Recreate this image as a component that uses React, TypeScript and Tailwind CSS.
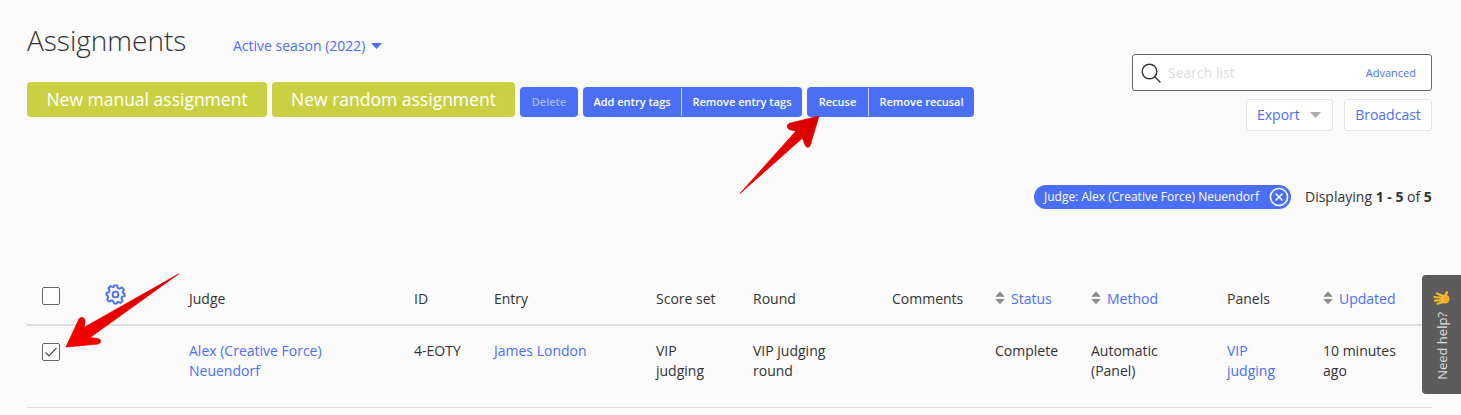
import React from "react";

const columns = "grid grid-cols-[77px_85px_225px_80px_162px_97px_139px_103px_96px_136px_96px_109px]";

const SortIcon = () => (
  <svg width="10" height="14" viewBox="0 0 10 14" className="mb-[3px] mr-[6px] shrink-0">
    <path d="M5 0.5 L9.8 5.8 L0.2 5.8 Z M0.2 8 L9.8 8 L5 13.3 Z" fill="#8a8a8a" />
  </svg>
);

const Caret = ({ color }: { color: string }) => (
  <svg width="11" height="6" viewBox="0 0 11 6">
    <path d="M0 0 L11 0 L5.5 6 Z" fill={color} />
  </svg>
);

const Checkbox = ({ checked }: { checked?: boolean }) => (
  <span className="flex h-[18px] w-[18px] items-center justify-center rounded-[2px] border border-[#666] bg-white">
    {checked && (
      <svg width="14" height="12" viewBox="0 0 14 12">
        <path d="M1.5 6.5 L5 10 L12.5 2" fill="none" stroke="#444" strokeWidth="1.1" />
      </svg>
    )}
  </span>
);

const GearIcon = () => (
  <svg width="21" height="21" viewBox="0 0 21 21" fill="none" stroke="#4a6ff5" strokeWidth="1.9" strokeLinejoin="round">
    <circle cx="10.5" cy="10.5" r="2.9" />
    <path d="M8.9 1.4 H12.1 L12.7 3.9 L14.6 4.7 L16.8 3.4 L19 5.6 L17.8 7.8 L18.5 9.6 L19.6 9.9 V12.1 L17.1 12.7 L16.3 14.6 L17.6 16.8 L15.4 19 L13.2 17.8 L12.1 18.3 L11.9 19.6 H9.1 L8.3 17.2 L6.4 16.4 L4.2 17.6 L2 15.4 L3.2 13.2 L2.5 11.4 L1.4 11.1 V8.9 L3.9 8.3 L4.7 6.4 L3.4 4.2 L5.6 2 L7.8 3.2 L8.5 2.9 Z" />
  </svg>
);

const SearchIcon = () => (
  <svg width="20" height="20" viewBox="0 0 20 20" fill="none" stroke="#333" strokeWidth="1.4" strokeLinecap="round">
    <circle cx="8.5" cy="8.5" r="7.3" />
    <path d="M13.8 13.8 L19 19" />
  </svg>
);

const HandIcon = () => (
  <svg width="17" height="14" viewBox="0 0 17 14" fill="none" stroke="#f6bb2e" strokeWidth="2.2" strokeLinecap="round">
    <circle cx="12" cy="8" r="4.6" fill="#f0a92a" stroke="none" />
    <path d="M10 5 L4 2.5 M10 7 L1.5 6 M10 9 L2 9.7 M10 11 L4.5 12.7 M12.5 4.5 L14 1.2" />
  </svg>
);

const SortHeader = ({ label }: { label: string }) => (
  <div className="flex items-center text-[#4a6ff5]">
    <SortIcon />
    {label}
  </div>
);

// The two red annotation arrows drawn on top of the screenshot
const Arrows = () => (
  <svg className="pointer-events-none absolute left-0 top-0" width="1461" height="415" viewBox="0 0 1461 415">
    <defs>
      <linearGradient id="arrowRed" x1="0" y1="1" x2="1" y2="0">
        <stop offset="0" stopColor="#f40000" />
        <stop offset="1" stopColor="#d80000" />
      </linearGradient>
    </defs>
    <path
      d="M740 193.5 L796 131 L789 129.5 Q785.5 126 789 123.5 L819 116 L810 146 Q807 149 805 145 L802.5 138 Z"
      fill="url(#arrowRed)"
      stroke="url(#arrowRed)"
      strokeWidth="0.8"
      strokeLinejoin="round"
    />
    <path
      d="M178.5 274 L84 327.5 L85 321.5 Q85 317 81 317.5 Q79.5 317.5 79 319 L66 347 L98 344 Q101 343 100.5 340.5 Q100 338.5 97 338.5 L90 337.5 Z"
      fill="url(#arrowRed)"
      stroke="url(#arrowRed)"
      strokeWidth="0.8"
      strokeLinejoin="round"
    />
  </svg>
);

export default function App() {
  return (
    <div className="relative h-[415px] w-[1461px] overflow-hidden bg-[#fafafa] pl-[27px] pr-[29px] font-['Open_Sans',sans-serif] text-[14px] leading-[20px] text-[#333]">
      <div className="flex items-start justify-between pt-[20px]">
        <div>
          <div className="flex h-[40px] items-center">
            <h1 className="w-[206px] text-[28px] font-light leading-[38px]">Assignments</h1>
            <div className="mt-[12px] flex items-center gap-[6px] text-[#4a6ff5]">
              Active season (2022)
              <Caret color="#4a6ff5" />
            </div>
          </div>
          <div className="mt-[22px] flex items-end gap-[5px] text-white">
            <button className="h-[35px] w-[240px] rounded-[4px] bg-[#c9d142] pb-[2px] text-[17.5px]">New manual assignment</button>
            <button className="h-[35px] w-[243px] rounded-[4px] bg-[#c9d142] pb-[2px] text-[17.5px]">New random assignment</button>
            <button className="h-[30px] w-[58px] rounded-[4px] bg-[#4a6ff5] text-[11px] font-[550] text-[#a9b9f3]">Delete</button>
            <div className="flex h-[30px] w-[219px] items-center rounded-[4px] bg-[#4a6ff5] text-[11px] font-[550]">
              <span className="w-[98px] text-center leading-[28px]">Add entry tags</span>
              <span className="flex-1 border-l border-[#c8d3fb] text-center leading-[28px]">Remove entry tags</span>
            </div>
            <div className="flex h-[30px] w-[167px] items-center rounded-[4px] bg-[#4a6ff5] text-[11px] font-[550]">
              <span className="w-[61px] text-center leading-[28px]">Recuse</span>
              <span className="flex-1 border-l border-[#c8d3fb] text-center leading-[28px]">Remove recusal</span>
            </div>
          </div>
        </div>
        <div className="flex w-[300px] flex-col items-end pt-[34px]">
          <div className="flex h-[37px] w-[300px] items-center rounded-[3px] border border-[#666] bg-white pl-[8px] pr-[15px]">
            <SearchIcon />
            <span className="ml-[7px] flex-1 text-[#dcdcdc]">Search list</span>
            <span className="text-[11px] text-[#4a6ff5]">Advanced</span>
          </div>
          <div className="mt-[8px] flex gap-[11px] text-[#4a6ff5]">
            <div className="flex h-[32px] w-[87px] items-center gap-[10px] rounded-[3px] border border-[#e3e3e3] bg-white pl-[10px]">
              Export
              <Caret color="#aaaaaa" />
            </div>
            <div className="flex h-[32px] w-[88px] items-center justify-center rounded-[3px] border border-[#e3e3e3] bg-white">
              Broadcast
            </div>
          </div>
        </div>
      </div>

      <div className="mt-[54px] flex h-[24px] items-center justify-end">
        <div className="flex h-[24px] w-[257px] items-center justify-between rounded-full bg-[#4a6ff5] pl-[10px] pr-[2px] text-[12px] text-white">
          Judge: Alex (Creative Force) Neuendorf
          <svg width="20" height="20" viewBox="0 0 20 20" fill="none" stroke="white" strokeWidth="1.5">
            <circle cx="10" cy="10" r="8.6" />
            <path d="M6.5 6.5 L13.5 13.5 M13.5 6.5 L6.5 13.5" />
          </svg>
        </div>
        <div className="ml-[14px] w-[127px] whitespace-nowrap">
          Displaying <b>1 - 5</b> of <b>5</b>
        </div>
      </div>

      <div className={`${columns} mt-[67px] h-[50px] items-center border-b-2 border-[#dddddd] pb-[2px]`}>
        <div className="pb-[7px] pl-[15px]">
          <Checkbox />
        </div>
        <div className="pb-[9px] pl-[1px]">
          <GearIcon />
        </div>
        <div>Judge</div>
        <div>ID</div>
        <div>Entry</div>
        <div>Score set</div>
        <div>Round</div>
        <div>Comments</div>
        <SortHeader label="Status" />
        <SortHeader label="Method" />
        <div>Panels</div>
        <SortHeader label="Updated" />
      </div>

      <div className={`${columns} h-[82px] border-b border-[#dddddd] pt-[15px]`}>
        <div className="pl-[15px] pt-[2px]">
          <Checkbox checked />
        </div>
        <div />
        <div className="text-[#4a6ff5]">
          Alex (Creative Force)
          <br />
          Neuendorf
        </div>
        <div>4-EOTY</div>
        <div className="text-[#4a6ff5]">James London</div>
        <div>
          VIP
          <br />
          judging
        </div>
        <div>
          VIP judging
          <br />
          round
        </div>
        <div />
        <div>Complete</div>
        <div>
          Automatic
          <br />
          (Panel)
        </div>
        <div className="text-[#4a6ff5]">
          VIP
          <br />
          judging
        </div>
        <div>
          10 minutes
          <br />
          ago
        </div>
      </div>

      <Arrows />

      <div className="absolute right-0 top-[275px] flex h-[119px] w-[39px] flex-col items-center rounded-l-[4px] bg-[#5c5c5c] pt-[16px] text-[#dddddd]">
        <HandIcon />
        <span className="mt-[7px] rotate-180 text-[13px] [writing-mode:vertical-rl]">Need help?</span>
      </div>
    </div>
  );
}
